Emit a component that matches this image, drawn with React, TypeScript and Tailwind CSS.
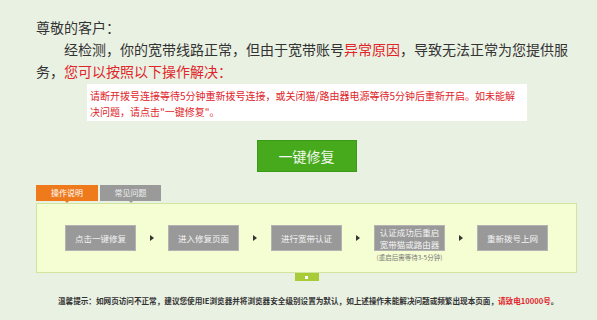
const steps = ['点击一键修复', '进入修复页面', '进行宽带认证', 'reboot', '重新拨号上网'];

const Arrow = () => (
    <div className="w-[32px] h-[26px] flex items-center justify-center">
        <div className="w-0 h-0 border-y-[3px] border-y-transparent border-l-[4px] border-l-[#333]" />
    </div>
);

const StepBox = ({label}: {label: string}) => {
    if (label === 'reboot') {
        return (
            <div className="flex flex-col items-center w-[71px]">
                <div className="w-[71px] h-[26px] bg-[#999] border border-[#b3b3b3] text-[#f4f4f4] text-[8.5px] leading-[12px] flex flex-col items-center justify-center">
                    <span>认证成功后重启</span>
                    <span>宽带猫或路由器</span>
                </div>
                <span className="text-[6.5px] leading-[10px] text-[#777] mt-[1px] whitespace-nowrap">(重启后需等待3-5分钟)</span>
            </div>
        );
    }
    return (
        <div className="w-[71px] h-[26px] bg-[#999] border border-[#b3b3b3] text-[#f4f4f4] text-[8.5px] flex items-center justify-center whitespace-nowrap">
            {label}
        </div>
    );
};

const App = () => {
    return (
        <div className="w-[597px] h-[320px] bg-[#e9f1e3] overflow-hidden font-['Microsoft_YaHei','Noto_Sans_CJK_SC',sans-serif]">
            <div className="w-[541px] ml-[36px] pt-[16px] flex flex-col">
                <div className="text-[14px] leading-[22px] text-[#333] whitespace-nowrap">
                    <p>尊敬的客户：</p>
                    <p className="indent-[2em]">
                        经检测，你的宽带线路正常，但由于宽带账号<span className="text-[#e0262b]">异常原因</span>，导致无法正常为您提供服<br />
                        务，<span className="text-[#e0262b]">您可以按照以下操作解决：</span>
                    </p>
                </div>

                <div className="ml-[51px] mt-[2px] w-[440px] h-[37px] bg-white px-[3px] pt-[4px] text-[10px] leading-[16px] text-[#e0262b] whitespace-nowrap">
                    请断开拨号连接等待5分钟重新拨号连接，或关闭猫/路由器电源等待5分钟后重新开启。如未能解<br />
                    决问题，请点击"一键修复"。
                </div>

                <button className="self-center mt-[19px] w-[100px] h-[32px] bg-[#47a91c] border border-[#3d9a16] text-[#f2f8ee] text-[14px]">
                    一键修复
                </button>

                <div className="flex gap-[2px] mt-[13px]">
                    <div className="relative w-[62px] h-[16px] bg-[#ee7a1c] text-white text-[8px] flex items-center justify-center">
                        操作说明
                        <div className="absolute left-1/2 -translate-x-1/2 top-full w-0 h-0 border-x-[2px] border-x-transparent border-t-[2px] border-t-[#ee7a1c]" />
                    </div>
                    <div className="relative w-[61px] h-[16px] bg-[#9a9a9a] text-[#eee] text-[8px] flex items-center justify-center">
                        常见问题
                        <div className="absolute left-1/2 -translate-x-1/2 top-full w-0 h-0 border-x-[2px] border-x-transparent border-t-[2px] border-t-[#9a9a9a]" />
                    </div>
                </div>

                <div className="mt-[2px] h-[70px] bg-[#f5fdd2] border border-[#cfe69c] flex justify-center items-start pt-[21px]">
                    {steps.map((s, i) => (
                        <div key={s} className="flex items-start">
                            {i > 0 && <Arrow />}
                            <StepBox label={s} />
                        </div>
                    ))}
                </div>

                <div className="self-center w-[24px] h-[8px] bg-[#a8cc38] flex items-center justify-center">
                    <div className="w-[3px] h-[3px] bg-white" />
                </div>

                <p className="mt-[15px] ml-[22px] text-[7.6px] leading-[10px] font-bold text-[#333] whitespace-nowrap">
                    温馨提示：如网页访问不正常，建议您使用IE浏览器并将浏览器安全级别设置为默认，如上述操作未能解决问题或频繁出现本页面，<span className="text-[#e0262b]">请致电10000号</span>。
                </p>
            </div>
        </div>
    );
};

export default App;
